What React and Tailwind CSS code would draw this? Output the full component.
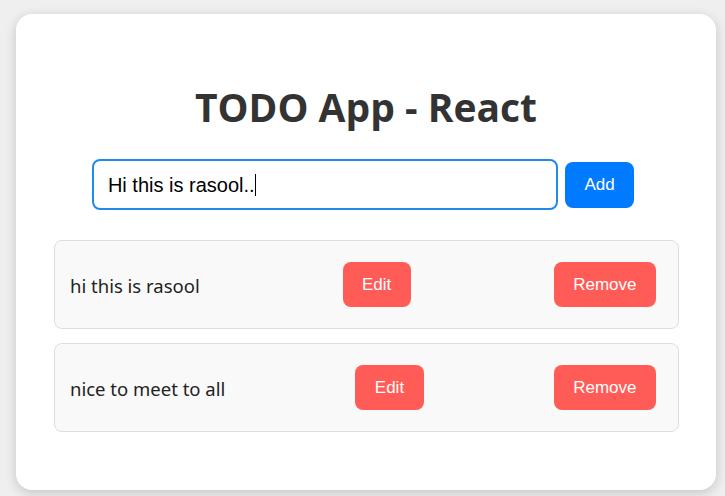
const todos = ["hi this is rasool", "nice to meet to all"];

function TodoRow({ text }) {
  return (
    <li className="flex items-center justify-between h-[89px] pl-[15px] pr-[22px] bg-[#f9f9f9] border border-[#dddddd] rounded-lg">
      <span className="pt-[3px] text-[18.5px] text-[#222222] font-['Noto_Sans',sans-serif]">{text}</span>
      <button className="h-[45px] px-[19.5px] rounded-lg bg-[#ff5c57] text-white text-[17px] font-['Liberation_Sans',Arial,sans-serif]">
        Edit
      </button>
      <button className="h-[45px] px-[19.5px] rounded-lg bg-[#ff5c57] text-white text-[17px] font-['Liberation_Sans',Arial,sans-serif]">
        Remove
      </button>
    </li>
  );
}

export default function App() {
  return (
    <div className="min-h-[496px] bg-[#efefef] pt-[14px] pl-4">
      <div className="w-[700px] h-[476px] bg-white rounded-2xl shadow-[0_3px_12px_rgba(0,0,0,0.18)] flex flex-col items-center pt-[70px]">
        <h1 className="text-[39px] leading-[46px] font-bold text-[#333333] font-['Open_Sans',sans-serif]">
          TODO App - React
        </h1>
        <div className="flex items-center gap-[7px] mt-[29px] ml-[-6px]">
          <div className="flex items-center w-[466px] h-[51px] border-2 border-[#2188ec] rounded-lg pl-[14px]">
            <span className="text-[20px] text-black font-['Liberation_Sans',Arial,sans-serif]">Hi this is rasool..</span>
            <span className="w-px h-[22px] bg-black" />
          </div>
          <button className="h-[46px] px-[19.5px] rounded-lg bg-[#007bff] text-white text-[17px] font-['Liberation_Sans',Arial,sans-serif]">
            Add
          </button>
        </div>
        <ul className="w-[625px] mt-[30px] flex flex-col gap-[14px] ml-[1px]">
          {todos.map((t) => (
            <TodoRow key={t} text={t} />
          ))}
        </ul>
      </div>
    </div>
  );
}
